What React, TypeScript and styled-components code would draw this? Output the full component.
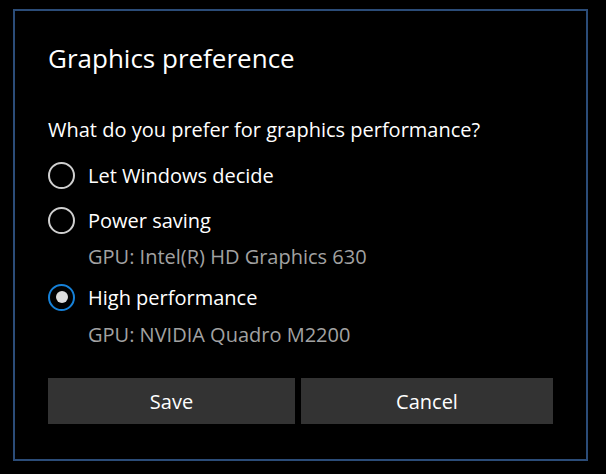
import React from "react";
import styled, { createGlobalStyle } from "styled-components";

const Global = createGlobalStyle`
  html, body { margin: 0; padding: 0; background: #000; }
  body { width: 606px; height: 474px; overflow: hidden; font-family: "Open Sans", "Noto Sans", sans-serif; }
`;

const Dialog = styled.div`
  box-sizing: border-box;
  margin: 9px 0 0 13px;
  width: 575px;
  height: 452px;
  border: 2px solid #2b4c78;
  padding: 31px 33px 0 33px;
  display: flex;
  flex-direction: column;
  color: #fff;
`;

const Title = styled.h1`
  margin: 0;
  font-weight: 400;
  font-size: 26px;
  line-height: 32px;
  color: #fff;
`;

const Question = styled.p`
  margin: 42px 0 0 0;
  font-size: 20px;
  line-height: 28px;
  color: #fff;
`;

const Options = styled.div`
  display: flex;
  flex-direction: column;
  margin-top: 17px;
`;

const Option = styled.label<{ $gap: number }>`
  display: flex;
  align-items: center;
  gap: 13px;
  height: 28px;
  margin-top: ${(p) => p.$gap}px;
  font-size: 20px;
  color: #fff;
`;

const Radio = styled.span<{ $checked?: boolean }>`
  box-sizing: border-box;
  width: 27px;
  height: 27px;
  border-radius: 50%;
  border: 2px solid ${(p) => (p.$checked ? "#1681d8" : "#cfcfcf")};
  display: flex;
  align-items: center;
  justify-content: center;
  flex-shrink: 0;
  &::after {
    content: "";
    display: ${(p) => (p.$checked ? "block" : "none")};
    width: 12px;
    height: 12px;
    border-radius: 50%;
    background: #dcdcdc;
  }
`;

const Detail = styled.div<{ $gap: number }>`
  margin-top: ${(p) => p.$gap}px;
  padding-left: 40px;
  height: 28px;
  line-height: 28px;
  font-size: 20px;
  color: #a2a2a2;
`;

const Buttons = styled.div`
  display: grid;
  grid-template-columns: 247px 252px;
  gap: 6px;
  margin-top: 29px;
`;

const Button = styled.button`
  height: 46px;
  border: none;
  background: #333333;
  color: #fff;
  font-family: inherit;
  font-size: 20px;
  padding: 0;
`;

export default function App() {
  return (
    <>
      <Global />
      <Dialog>
        <Title>Graphics preference</Title>
        <Question>What do you prefer for graphics performance?</Question>
        <Options>
          <Option $gap={0}>
            <Radio />
            Let Windows decide
          </Option>
          <Option $gap={17}>
            <Radio />
            Power saving
          </Option>
          <Detail $gap={9}>GPU: Intel(R) HD Graphics 630</Detail>
          <Option $gap={12}>
            <Radio $checked />
            High performance
          </Option>
          <Detail $gap={10}>GPU: NVIDIA Quadro M2200</Detail>
        </Options>
        <Buttons>
          <Button>Save</Button>
          <Button>Cancel</Button>
        </Buttons>
      </Dialog>
    </>
  );
}
